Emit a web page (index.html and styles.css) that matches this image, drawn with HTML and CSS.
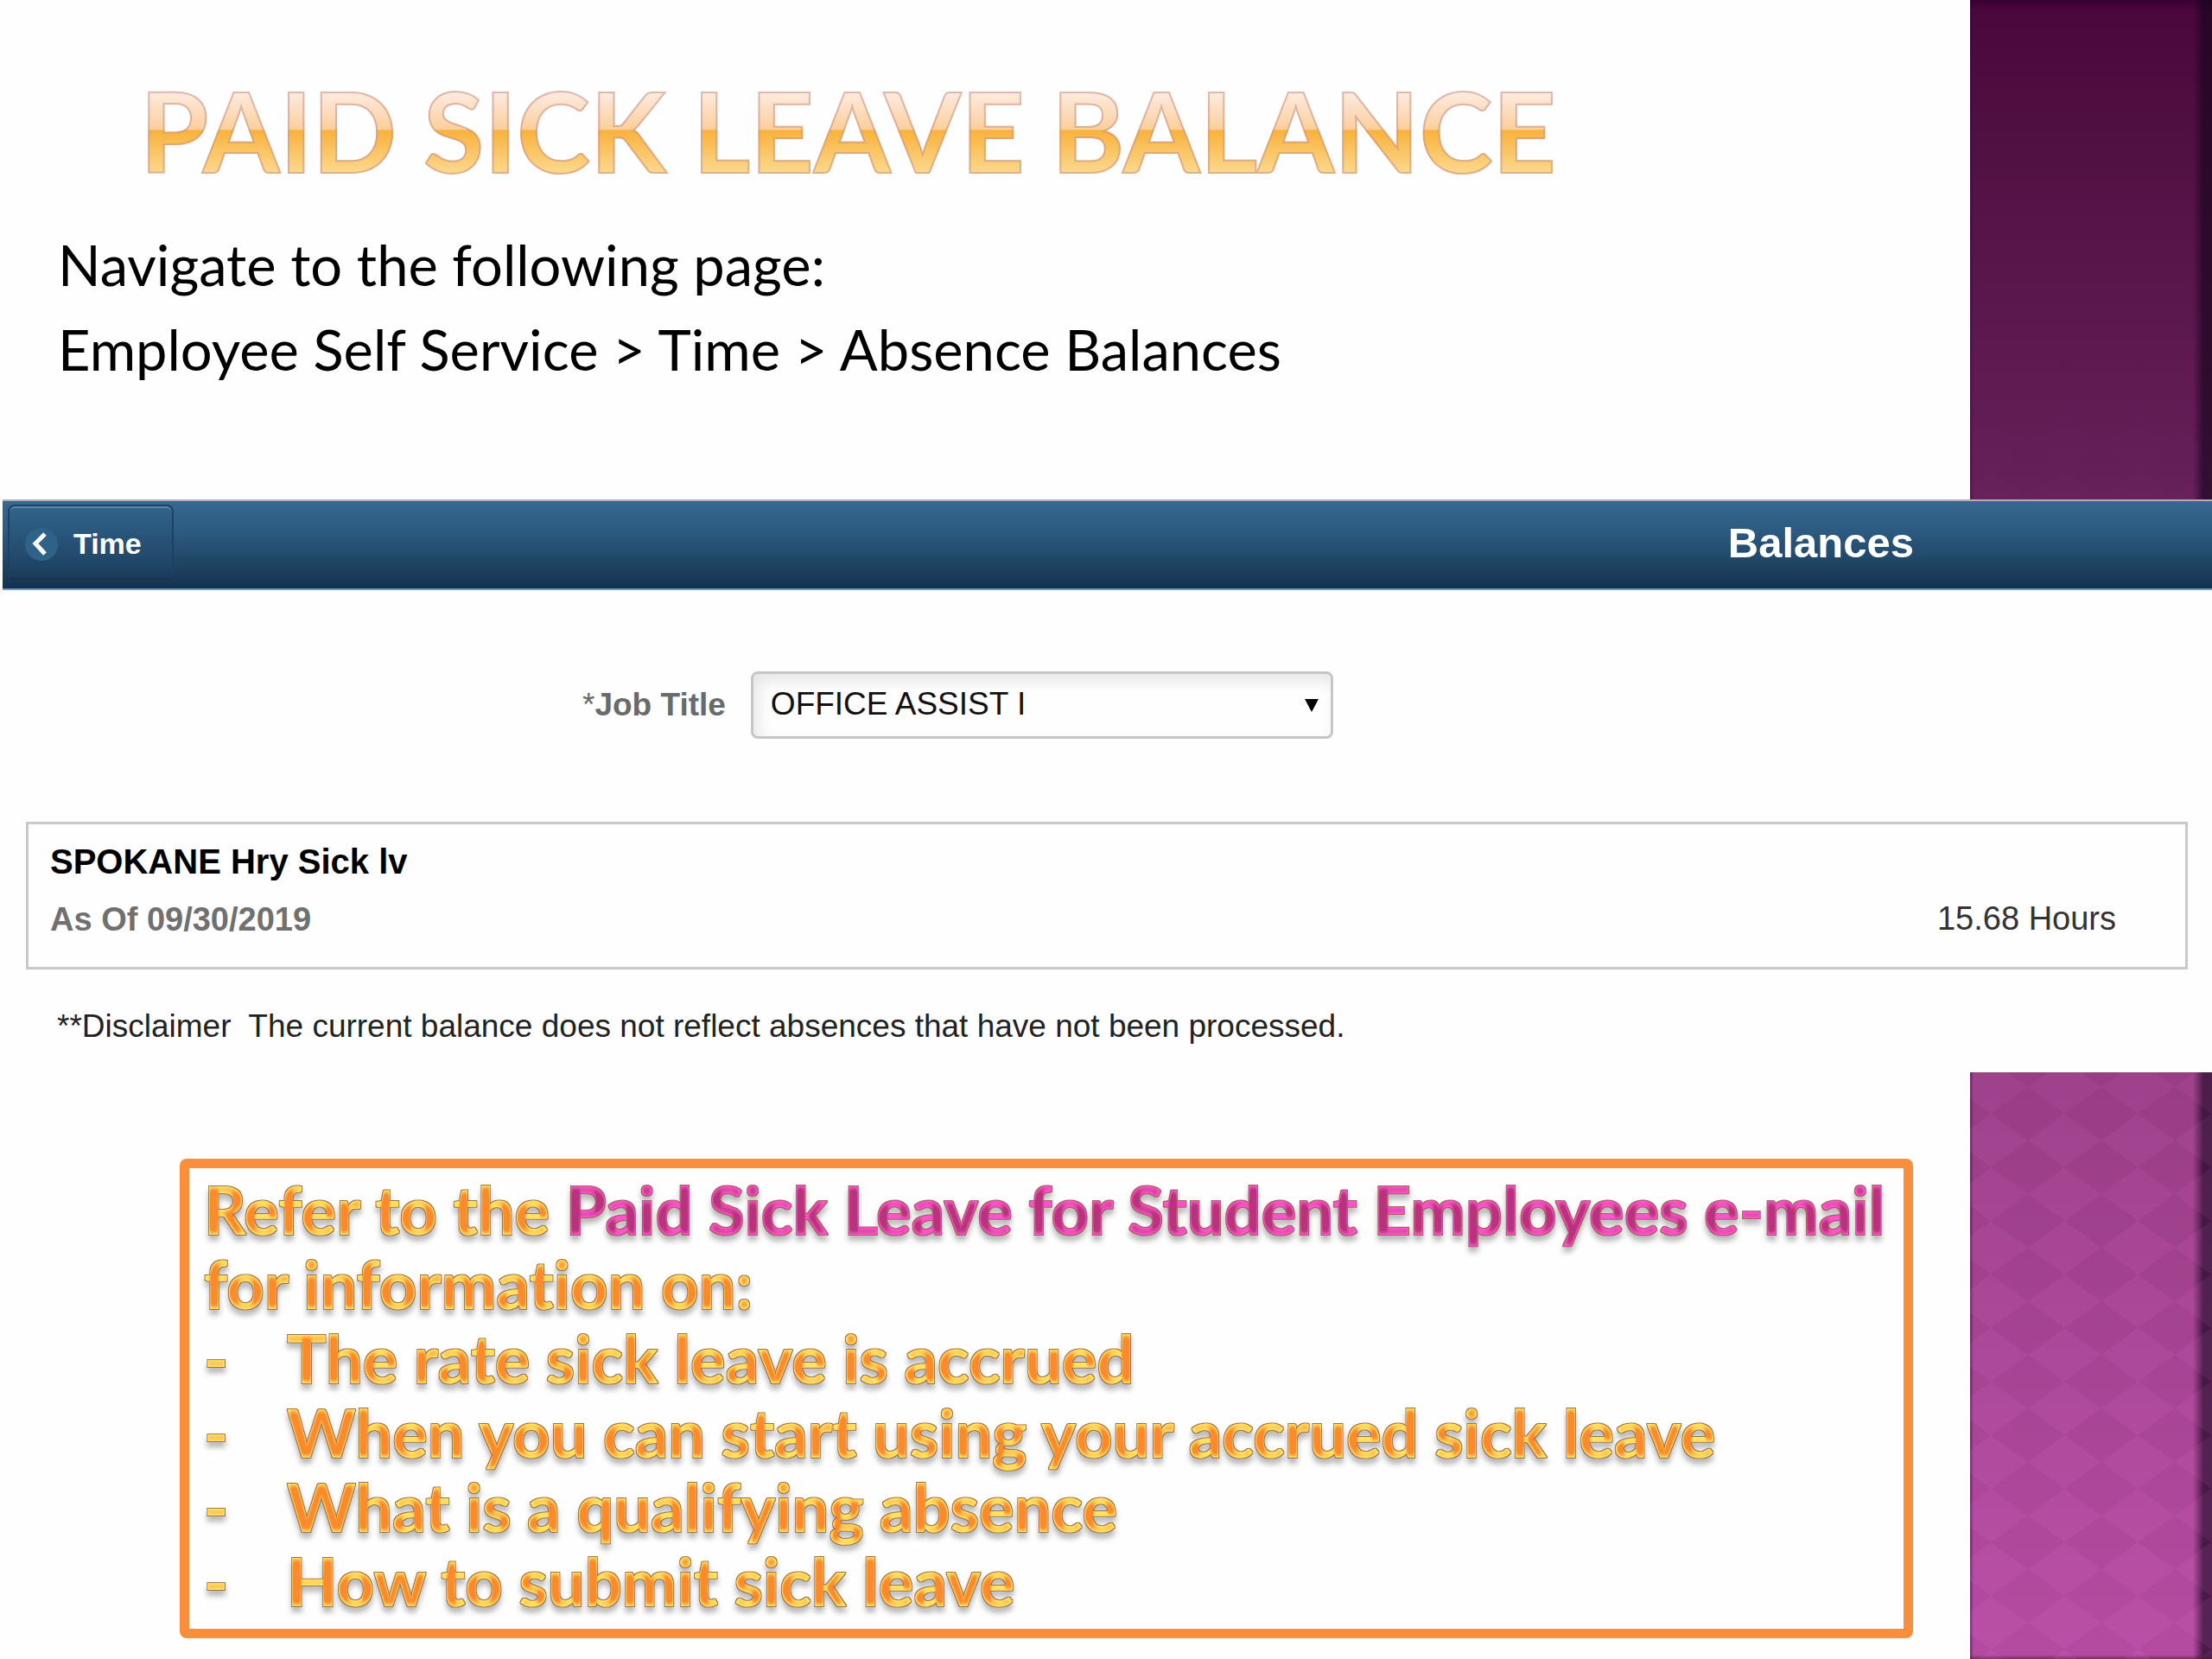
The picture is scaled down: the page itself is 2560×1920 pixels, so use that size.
FILE: index.html
```
<!DOCTYPE html>
<html lang="en">
<head>
<meta charset="utf-8">
<title>Paid Sick Leave Balance</title>
<link rel="stylesheet" href="styles.css">
</head>
<body>
<svg class="defs" width="0" height="0" aria-hidden="true">
  <defs>
    <filter id="bevel-gold" x="-5%" y="-20%" width="110%" height="150%" color-interpolation-filters="sRGB">
      <feGaussianBlur in="SourceAlpha" stdDeviation="1 5" result="soft"/>
      <feComponentTransfer in="soft" result="edge"><feFuncA type="linear" slope="-2.6" intercept="2.3"/></feComponentTransfer>
      <feFlood flood-color="#ffe264"/>
      <feComposite in2="edge" operator="in"/>
      <feComposite in2="SourceAlpha" operator="in" result="shine"/>
      <feMorphology in="SourceAlpha" operator="dilate" radius="1" result="fat"/>
      <feFlood flood-color="#a0744a"/>
      <feComposite in2="fat" operator="in" result="rim"/>
      <feGaussianBlur in="fat" stdDeviation="3"/>
      <feOffset dy="6"/>
      <feComponentTransfer result="shadow"><feFuncA type="linear" slope="0.28"/></feComponentTransfer>
      <feMerge>
        <feMergeNode in="shadow"/><feMergeNode in="rim"/><feMergeNode in="SourceGraphic"/><feMergeNode in="shine"/>
      </feMerge>
    </filter>
    <filter id="bevel-pink" x="-5%" y="-20%" width="110%" height="150%" color-interpolation-filters="sRGB">
      <feGaussianBlur in="SourceAlpha" stdDeviation="1 5" result="soft"/>
      <feComponentTransfer in="soft" result="edge"><feFuncA type="linear" slope="-2.6" intercept="2.3"/></feComponentTransfer>
      <feFlood flood-color="#fb56c8"/>
      <feComposite in2="edge" operator="in"/>
      <feComposite in2="SourceAlpha" operator="in" result="shine"/>
      <feMorphology in="SourceAlpha" operator="dilate" radius="1" result="fat"/>
      <feFlood flood-color="#a8605c"/>
      <feComposite in2="fat" operator="in" result="rim"/>
      <feGaussianBlur in="fat" stdDeviation="3"/>
      <feOffset dy="6"/>
      <feComponentTransfer result="shadow"><feFuncA type="linear" slope="0.28"/></feComponentTransfer>
      <feMerge>
        <feMergeNode in="shadow"/><feMergeNode in="rim"/><feMergeNode in="SourceGraphic"/><feMergeNode in="shine"/>
      </feMerge>
    </filter>
  </defs>
</svg>

<main class="slide">
  <aside class="strip" aria-hidden="true">
    <svg class="strip-pattern" width="100%" height="100%">
      <defs>
        <pattern id="diamonds" width="85" height="62" patternUnits="userSpaceOnUse" x="-18" y="-13">
          <path d="M42 0L85 31L42 62L0 31Z" fill="#ff8cf0" fill-opacity="0.08"/>
        </pattern>
      </defs>
      <rect width="100%" height="100%" fill="url(#diamonds)"/>
    </svg>
  </aside>

  <header class="intro">
    <h1 class="title">PAID SICK LEAVE BALANCE</h1>
    <p class="lead">Navigate to the following page:</p>
    <p class="lead">Employee Self Service &gt; Time &gt; Absence Balances</p>
  </header>

  <section class="app">
    <div class="bar">
      <button class="back" type="button">
        <svg width="38" height="38" viewBox="0 0 38 38" aria-hidden="true">
          <circle cx="19" cy="19" r="19" fill="#2f6288"/>
          <path d="M23 7L12 18L23 30" fill="none" stroke="#fff" stroke-width="5"/>
        </svg>
        Time
      </button>
      <h2 class="bar-title">Balances</h2>
    </div>

    <form class="job">
      <label for="job-title"><span class="star">*</span>Job Title</label>
      <div class="picker">
        <select id="job-title"><option>OFFICE ASSIST I</option></select>
        <svg class="arrow" width="16" height="15" viewBox="0 0 16 15" aria-hidden="true"><path d="M0 0H16L8 15Z"/></svg>
      </div>
    </form>

    <div class="card">
      <div>
        <h3 class="plan">SPOKANE Hry Sick lv</h3>
        <p class="as-of">As Of 09/30/2019</p>
      </div>
      <p class="hours">15.68 Hours</p>
    </div>

    <p class="disclaimer">**Disclaimer&nbsp; The current balance does not reflect absences that have not been processed.</p>
  </section>

  <section class="more">
    <div class="callout">
      <p><span class="gold">Refer to the </span><span class="pink">Paid Sick Leave for Student Employees e-mail</span><br><span class="gold">for information on:</span></p>
      <ul>
        <li class="gold">The rate sick leave is accrued</li>
        <li class="gold">When you can start using your accrued sick leave</li>
        <li class="gold">What is a qualifying absence</li>
        <li class="gold">How to submit sick leave</li>
      </ul>
    </div>
  </section>
</main>
</body>
</html>
```
FILE: styles.css
```
* { box-sizing: border-box; }
body, h1, h2, h3, p, ul { margin: 0; padding: 0; }
body {
  background: #fefefe;
  color: #000;
  font-family: Lato, "Open Sans", sans-serif;
  font-variant-ligatures: none;
}
.defs { position: absolute; }

.slide {
  display: grid;
  grid-template-columns: minmax(0, 1fr) 280px;
  grid-template-rows: 578px auto 1fr;
  min-height: 100vh;
}

/* decorative side strip */
.strip {
  grid-column: 2;
  grid-row: 1 / 4;
  background:
    linear-gradient(90deg, rgba(40, 10, 50, .5), transparent 4px),
    linear-gradient(270deg, rgba(22, 5, 30, .68) 10px, transparent 22px),
    linear-gradient(0deg, rgba(40, 0, 50, .5), transparent 6px),
    linear-gradient(180deg, #3a0033 0, #4a073c 12px, #511042 160px, #66205a 578px, #983d85 1240px, #b54ba1 100%);
}
.strip-pattern {
  display: block;
  -webkit-mask-image: linear-gradient(180deg, transparent 20%, #000 75%);
  mask-image: linear-gradient(180deg, transparent 20%, #000 75%);
}

.intro {
  grid-column: 1;
  grid-row: 1;
  padding: 75px 67px 0;
}
.title {
  margin: 0 0 30px 95px;
  font-size: 128px;
  line-height: 152px;
  font-weight: 700;
  color: transparent;
  background: linear-gradient(180deg, #fdeade 22%, #fbcf9c 49%, #f9b23c 50%, #fcd88e 82%);
  -webkit-background-clip: text;
  background-clip: text;
  -webkit-text-stroke: 2px rgba(205, 150, 140, .6);
}
.lead { font-size: 65px; line-height: 98px; }

/* application panel, laid over the strip */
.app {
  grid-column: 1 / 3;
  grid-row: 2;
  z-index: 1;
  padding-bottom: 30px;
  background: #fefefe;
  font-family: "Liberation Sans", Arial, sans-serif;
  font-size: 37px;
  line-height: 44px;
}
.bar {
  display: flex;
  align-items: center;
  justify-content: space-between;
  height: 105px;
  margin-left: 3px;
  padding: 4px 345px 10px 6px;
  border-top: 2px solid #b0aeb2;
  border-bottom: 2px solid #6f9cc6;
  background: linear-gradient(180deg, #37688f, #2c5a80 35%, #1f4464 72%, #15324f);
  color: #fff;
}
.back {
  display: flex;
  align-items: center;
  gap: 18px;
  align-self: stretch;
  width: 192px;
  padding: 4px 0 0 18px;
  border: 2px solid #1b4263;
  border-bottom-color: #17344f;
  border-radius: 8px;
  background: linear-gradient(180deg, #32638a, #2a577c 35%, #1f4464 85%, #1b3b58);
  box-shadow: inset 0 3px 1px -1px #5d89ac;
  color: #fff;
  font: bold 34px "Liberation Sans", Arial, sans-serif;
}
.bar-title { font-size: 49px; line-height: 56px; }

.job {
  display: flex;
  align-items: center;
  gap: 29px;
  padding: 94px 0 0 674px;
  color: #6a6a6a;
  font-weight: 700;
}
.star { font-weight: 400; }
.picker { display: grid; align-items: center; width: 674px; }
.picker > * { grid-area: 1 / 1; }
.picker select {
  appearance: none;
  width: 100%;
  height: 78px;
  padding: 0 20px 4px;
  border: 3px solid #c6c6c6;
  border-radius: 8px;
  background: #fefefe;
  box-shadow: inset 6px 8px 16px #e6e6e6;
  color: #111;
  font: 37px "Liberation Sans", Arial, sans-serif;
}
.arrow { justify-self: end; margin-right: 17px; pointer-events: none; }

.card {
  display: flex;
  justify-content: space-between;
  align-items: flex-end;
  margin: 96px 28px 0 30px;
  padding: 16px 80px 28px 25px;
  border: 3px solid #c9c9c9;
}
.plan { font-size: 40px; line-height: 54px; margin-bottom: 13px; }
.as-of { color: #707070; font-size: 38px; line-height: 54px; font-weight: 700; }
.hours { color: #333; font-size: 38px; line-height: 56px; }
.disclaimer { margin: 43px 0 0 66px; line-height: 46px; color: #222; }

/* callout */
.more { grid-column: 1; grid-row: 3; padding: 100px 66px 25px 208px; }
.callout {
  padding: 5px 10px 12px 17px;
  border: 11px solid #f98e3c;
  border-radius: 8px;
  font-size: 76px;
  line-height: 86px;
  font-weight: 700;
}
.callout ul { list-style: none; }
.callout li { display: flex; }
.callout li::before { content: "-"; width: 96px; }
.gold { color: #fb8a2c; filter: url(#bevel-gold); }
.pink { color: #b9327d; filter: url(#bevel-pink); }
```
